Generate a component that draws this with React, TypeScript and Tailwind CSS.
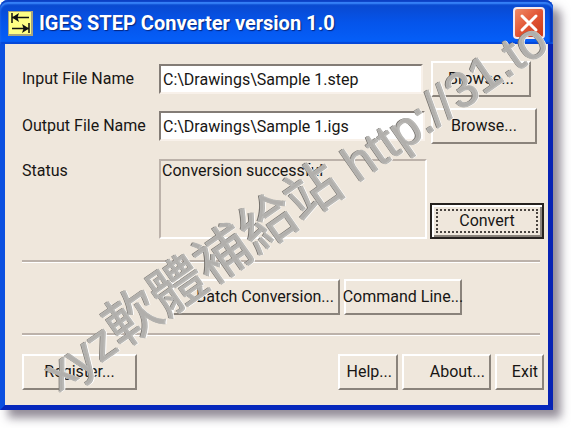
import React from 'react'
import { cva } from 'class-variance-authority'
import clsx from 'clsx'

const button = cva(
  'flex items-center whitespace-nowrap bg-[#efe7dc] border-2 border-t-white border-l-white border-r-[#8a837b] border-b-[#8a837b] h-9 active:border-t-[#8a837b] active:border-l-[#8a837b]',
  {
    variants: {
      align: {
        center: 'justify-center',
        end: 'justify-end',
      },
    },
    defaultVariants: { align: 'center' },
  }
)

function Separator() {
  return <hr className="mr-1 h-[3px] border-t-2 border-b border-t-[#bcb2aa] border-b-white" />
}

function AppIcon() {
  return (
    <svg viewBox="0 0 25 25" className="size-[25px] shrink-0" aria-hidden="true">
      <rect width="25" height="25" fill="#a9a67c" />
      <rect x="1" y="1" width="22" height="22" fill="#ffff84" />
      <g stroke="#111" strokeWidth="1.5" fill="none">
        <path d="M4 2v10M4 6.5h17M21 12v10M4 17.5h17" />
      </g>
      <path d="M4 6.5l7-4.5-1.5 4.5L11 11zM21 17.5L14 13l1.5 4.5L14 22z" fill="#111" />
    </svg>
  )
}

function TitleBar() {
  return (
    <header className="flex h-11 items-center rounded-t-lg bg-linear-to-b from-[#0a46c8] via-[#0554ea] to-[#0560fa] px-2 pt-[2px] shadow-[inset_0_2px_1px_#0a3fc4,inset_0_4px_2px_#3d8cff,inset_0_-2px_1px_#0648d8,inset_-3px_0_2px_#0530b8]">
      <AppIcon />
      <h1 className="ml-[6px] flex-1 whitespace-nowrap font-['Roboto',sans-serif] text-xl leading-6 font-bold text-white [text-shadow:1px_1px_1px_#06247c]">
        IGES STEP Converter version 1.0
      </h1>
      <button
        aria-label="Close"
        className="flex size-8 items-center justify-center rounded-[4px] border-2 border-[#f5e9ee] bg-linear-to-br from-[#ee8a66] via-[#e25535] to-[#c93a17]"
      >
        <svg viewBox="0 0 20 20" className="size-5">
          <path d="M3 3l14 14M17 3L3 17" stroke="#fff" strokeWidth="3" strokeLinecap="round" />
        </svg>
      </button>
    </header>
  )
}

interface FileRowProps {
  id: string
  label: string
  value: string
  fieldClass: string
  buttonClass: string
}

function FileRow({ id, label, value, fieldClass, buttonClass }: FileRowProps) {
  const [path, setPath] = React.useState(value)

  return (
    <div className="flex items-center">
      <label htmlFor={id} className="w-[137px] shrink-0 whitespace-nowrap">
        {label}
      </label>
      <div className="min-w-0 flex-1">
        <div className={fieldClass}>
          <input
            id={id}
            value={path}
            onChange={(e) => setPath(e.target.value)}
            className="block h-[30px] w-full border-2 border-t-[#837c76] border-l-[#837c76] border-r-[#f8f1ea] border-b-[#f8f1ea] bg-white px-[2px] outline-none"
          />
        </div>
      </div>
      <div className="ml-[3px] w-[114px] shrink-0">
        <button className={clsx(button(), buttonClass)}>Browse...</button>
      </div>
    </div>
  )
}

function Watermark() {
  return (
    <div className="pointer-events-none absolute inset-0 flex items-center justify-center pb-6 pl-4">
      <span className="-rotate-35 whitespace-nowrap font-['Liberation_Sans',sans-serif] text-[50px] leading-none text-[#b7b6b3]/90 [-webkit-text-stroke:1px_#b7b6b3] [text-shadow:-1px_-1px_0_#77736e,1px_1px_0_#fff]">
        xyz
        <span className="font-['Noto_Sans_CJK_TC',sans-serif] text-[55px]">軟體補給站</span>{' '}
        http://31.to
      </span>
    </div>
  )
}

export default function App() {
  return (
    <main className="relative min-h-screen overflow-hidden bg-white pr-[18px] pb-[18px] font-['Roboto',sans-serif] text-base leading-6 text-[#181614]">
      <section className="rounded-t-lg shadow-[8px_8px_10px_rgba(60,50,70,0.55)]">
        <TitleBar />
        <div className="border-x-[5px] border-b-[5px] border-l-[#0b50e0] border-r-[#0622b4] border-b-[#0628bc] bg-[#efe7dc] pt-[17px] pr-1 pb-[15px] pl-[17px]">
          <div className="flex flex-col gap-[11px]">
            <FileRow
              id="input-file"
              label="Input File Name"
              value="C:\Drawings\Sample 1.step"
              fieldClass="mr-1"
              buttonClass="ml-px w-[100px]"
            />
            <FileRow
              id="output-file"
              label="Output File Name"
              value="C:\Drawings\Sample 1.igs"
              fieldClass="mr-[2px]"
              buttonClass="ml-px w-[106px]"
            />
          </div>

          <div className="mt-[15px] mb-[21px] flex items-end">
            <label htmlFor="status" className="w-[137px] shrink-0 self-start">
              Status
            </label>
            <output
              id="status"
              className="block h-20 min-w-0 flex-1 border-2 border-t-[#bcb2aa] border-l-[#bcb2aa] border-r-white border-b-white px-px leading-5"
            >
              Conversion successful
            </output>
            <button className="ml-[3px] h-9 w-[114px] shrink-0 border-2 border-[#26221f] p-1 shadow-[inset_2px_2px_0_#fff,inset_-2px_-2px_0_#8a837b]">
              <span className="flex h-6 w-full items-center justify-center border-2 border-dotted border-[#4a4541]">
                Convert
              </span>
            </button>
          </div>

          <Separator />
          <div className="mt-4 mb-[18px] flex gap-1 pr-[82px] pl-[150px]">
            <button className={clsx(button({ align: 'end' }), 'flex-1 pr-1')}>
              Batch Conversion...
            </button>
            <button className={clsx(button(), 'w-[118px]')}>Command Line...</button>
          </div>
          <Separator />

          <footer className="mt-[18px] flex gap-1">
            <button className={clsx(button(), 'mr-auto w-[115px]')}>Register...</button>
            <button className={clsx(button({ align: 'end' }), 'w-[60px] pr-1')}>Help...</button>
            <button className={clsx(button({ align: 'end' }), 'w-[89px] pr-1')}>About...</button>
            <button className={clsx(button({ align: 'end' }), 'w-[49px] pr-1')}>Exit</button>
          </footer>
        </div>
      </section>
      <Watermark />
    </main>
  )
}
